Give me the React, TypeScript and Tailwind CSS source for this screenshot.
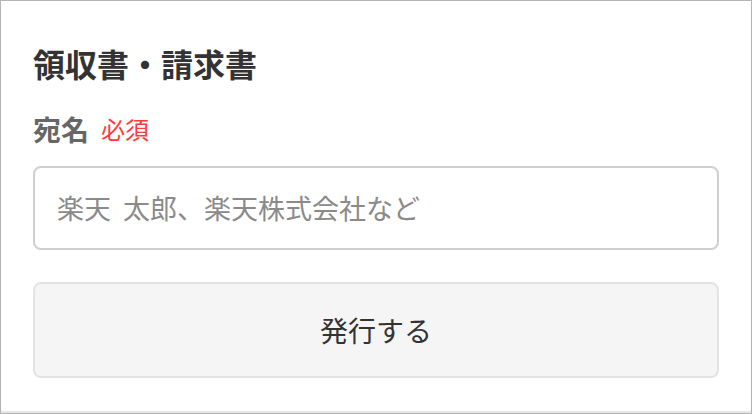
import React from "react";

export default function App() {
  return (
    <div
      className="w-[752px] h-[414px] bg-white border border-[#b5b5b5] flex flex-col"
      style={{ fontFamily: '"Noto Sans CJK JP", "Noto Sans", sans-serif' }}
    >
      <div className="flex-1 flex flex-col px-8 pt-[38px]">
        <h1 className="text-[32px] leading-[48px] font-bold text-[#333]">領収書・請求書</h1>
        <div className="mt-[22px] flex items-center h-[40px]">
          <span className="text-[28px] font-bold text-[#666]">宛名</span>
          <span className="ml-[12px] text-[24px] text-[#ff3b3b]">必須</span>
        </div>
        <div className="mt-[17px] h-[84px] border-2 border-[#cfcfcf] rounded-[8px] flex items-center px-[22px]">
          <span className="text-[27px] text-[#8a8a8a] [word-spacing:6px]">楽天 太郎、楽天株式会社など</span>
        </div>
        <div className="mt-[32px] h-[96px] border-2 border-[#e3e3e3] bg-[#f5f5f5] rounded-[8px] flex items-center justify-center">
          <span className="text-[28px] text-[#333]">発行する</span>
        </div>
      </div>
      <div className="h-[2px] bg-[#e6e6e6]" />
    </div>
  );
}
